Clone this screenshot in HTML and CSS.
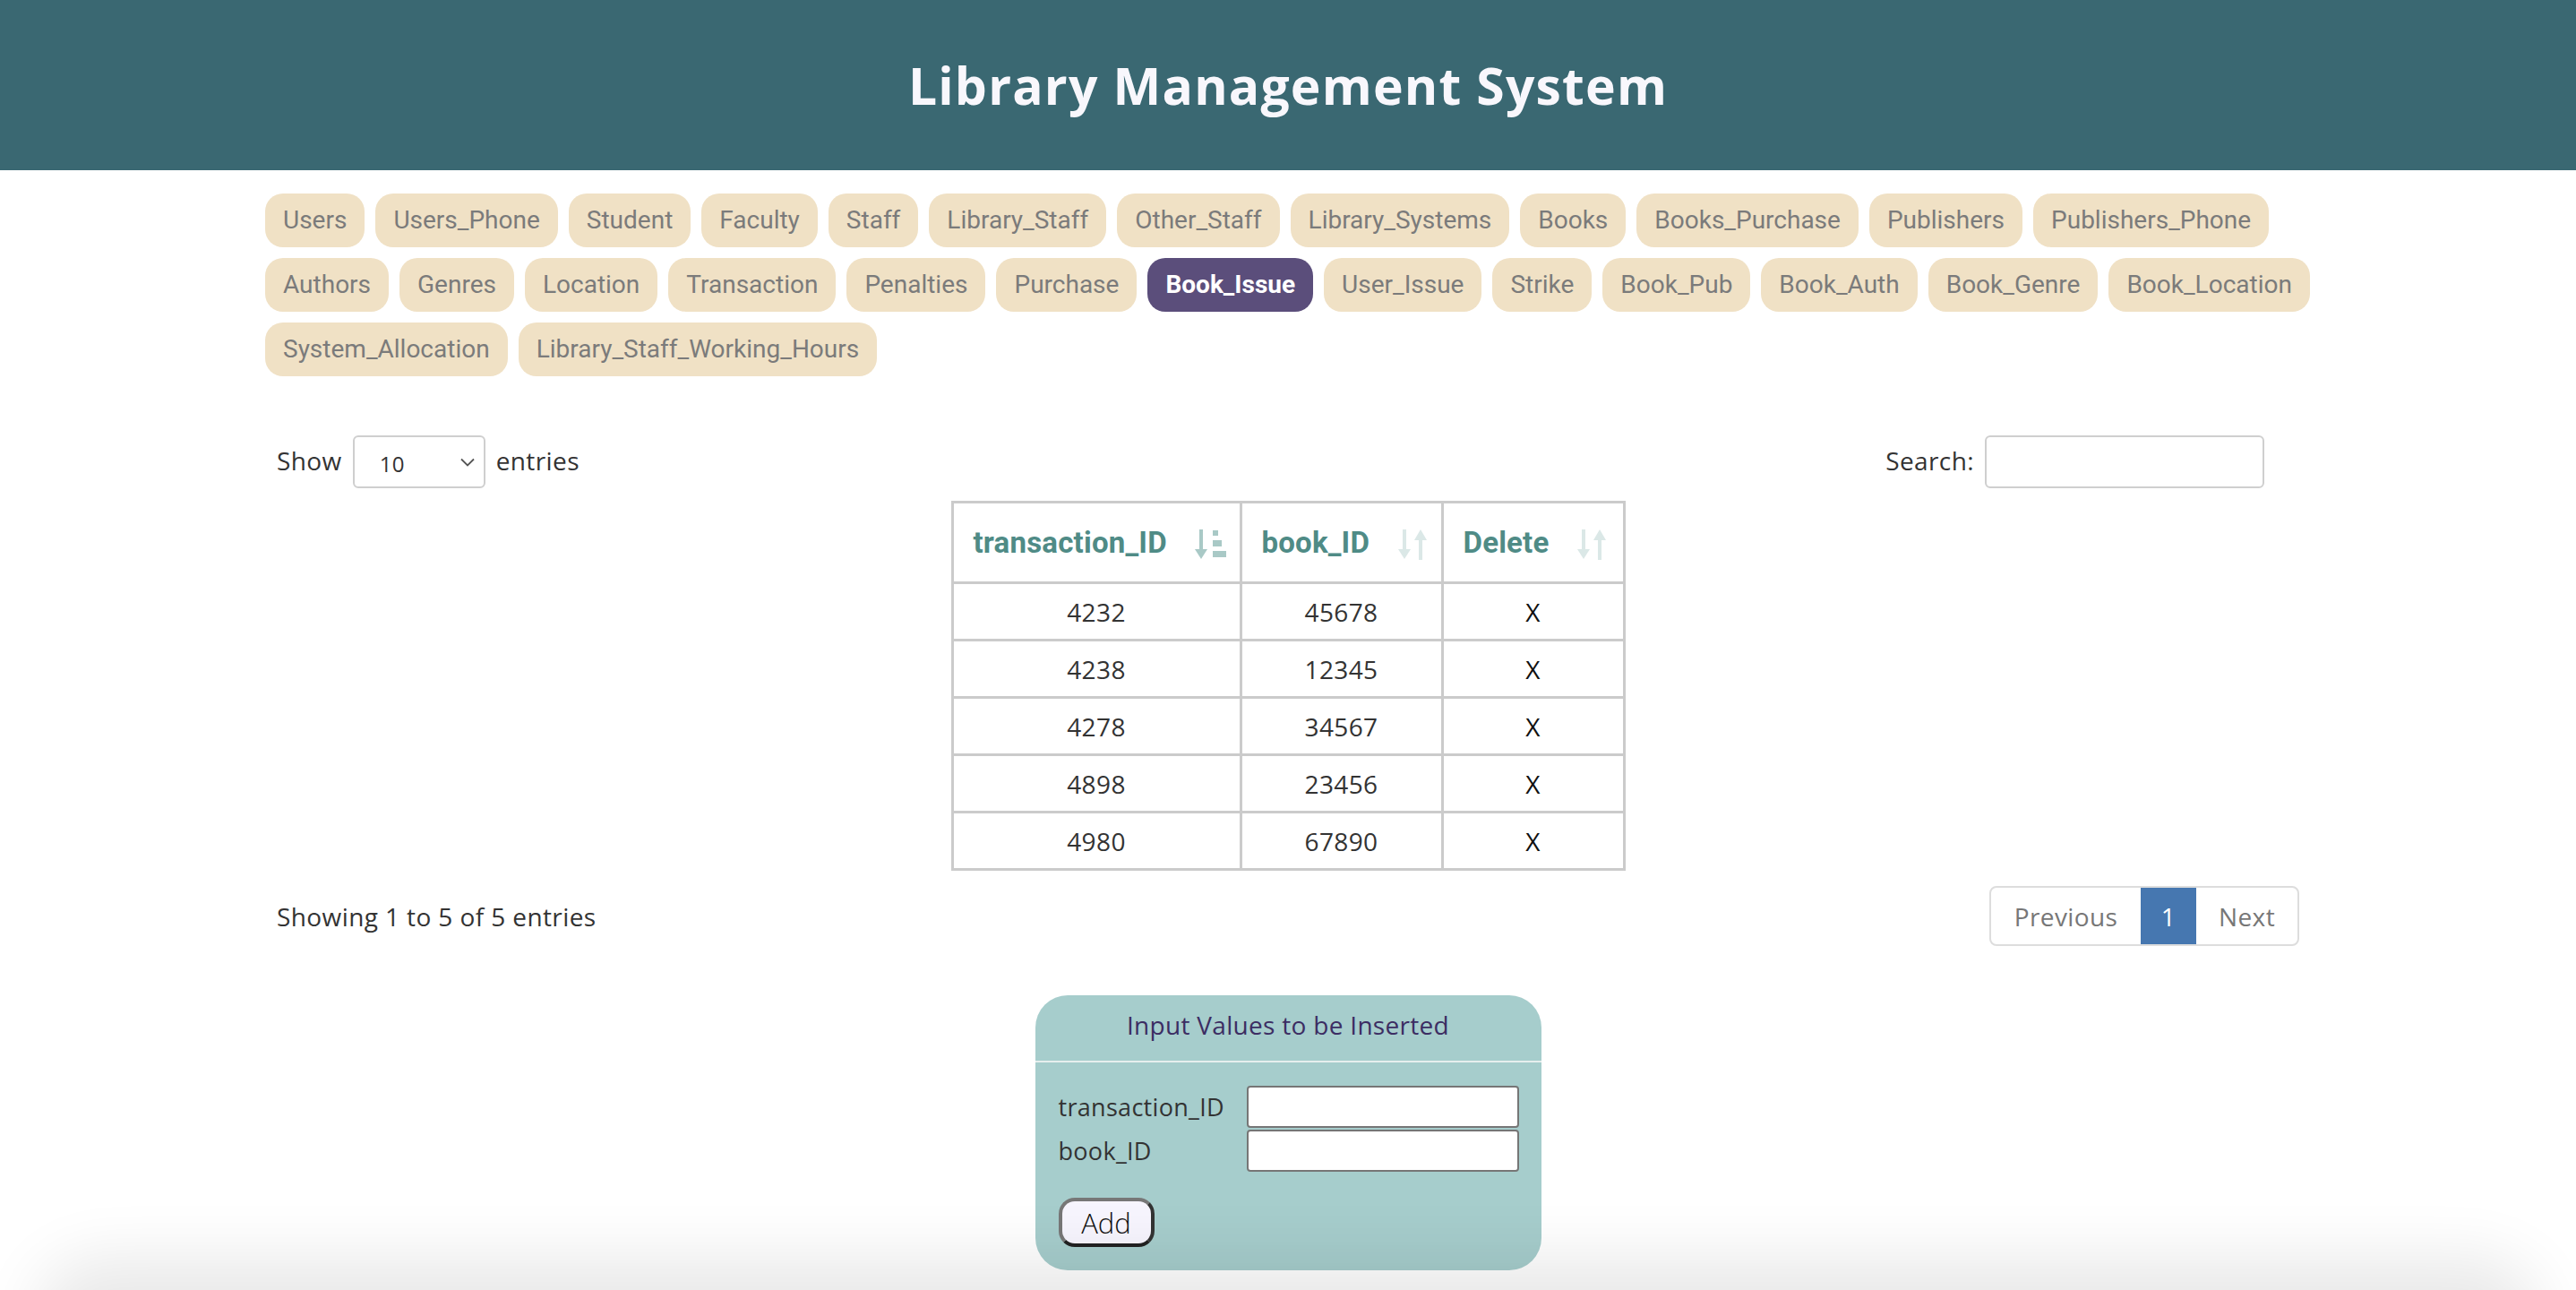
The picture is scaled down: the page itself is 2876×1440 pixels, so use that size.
FILE: index.html
```html
<!DOCTYPE html>
<html lang="en">
<head>
<meta charset="utf-8">
<title>Library Management System</title>
<link rel="stylesheet" href="styles.css">
</head>
<body>
<header class="site-header">
  <h1 class="site-title">Library Management System</h1>
</header>

<nav class="tabs">
  <button class="tab">Users</button>
  <button class="tab">Users_Phone</button>
  <button class="tab">Student</button>
  <button class="tab">Faculty</button>
  <button class="tab">Staff</button>
  <button class="tab">Library_Staff</button>
  <button class="tab">Other_Staff</button>
  <button class="tab">Library_Systems</button>
  <button class="tab">Books</button>
  <button class="tab">Books_Purchase</button>
  <button class="tab">Publishers</button>
  <button class="tab">Publishers_Phone</button>
  <button class="tab">Authors</button>
  <button class="tab">Genres</button>
  <button class="tab">Location</button>
  <button class="tab">Transaction</button>
  <button class="tab">Penalties</button>
  <button class="tab">Purchase</button>
  <button class="tab tab-active">Book_Issue</button>
  <button class="tab">User_Issue</button>
  <button class="tab">Strike</button>
  <button class="tab">Book_Pub</button>
  <button class="tab">Book_Auth</button>
  <button class="tab">Book_Genre</button>
  <button class="tab">Book_Location</button>
  <button class="tab">System_Allocation</button>
  <button class="tab">Library_Staff_Working_Hours</button>
</nav>

<section class="dt">
  <div class="dt-top">
    <div class="dt-length">
      <span>Show</span>
      <div class="select">
        <span class="select-value">10</span>
        <svg class="chev" width="16" height="10" viewBox="0 0 16 10"><path d="M1 1.5 L8 8.5 L15 1.5" fill="none" stroke="#555" stroke-width="1.8"/></svg>
      </div>
      <span>entries</span>
    </div>
    <div class="dt-search">
      <span>Search:</span>
      <div class="search-input"></div>
    </div>
  </div>

  <table class="grid">
    <thead>
      <tr>
        <th class="c1"><div class="th-in"><span>transaction_ID</span>
          <svg class="sort" width="36" height="34" viewBox="0 0 36 34"><rect x="5" y="0" width="4" height="24" fill="#a9c9c6"/><polygon points="0,22 14,22 7,33" fill="#a9c9c6"/><rect x="20" y="1" width="6" height="6" fill="#a9c9c6"/><rect x="20" y="12" width="10" height="7" fill="#a9c9c6"/><rect x="20" y="24" width="15" height="7" fill="#a9c9c6"/></svg></div></th>
        <th class="c2"><div class="th-in"><span>book_ID</span>
          <svg class="sort" width="34" height="34" viewBox="0 0 34 34"><rect x="5" y="0" width="4" height="24" fill="#dbe8e7"/><polygon points="0,22 14,22 7,33" fill="#dbe8e7"/><rect x="23" y="10" width="4" height="24" fill="#dbe8e7"/><polygon points="18,12 32,12 25,0" fill="#dbe8e7"/></svg></div></th>
        <th class="c3"><div class="th-in"><span>Delete</span>
          <svg class="sort" width="34" height="34" viewBox="0 0 34 34"><rect x="5" y="0" width="4" height="24" fill="#dbe8e7"/><polygon points="0,22 14,22 7,33" fill="#dbe8e7"/><rect x="23" y="10" width="4" height="24" fill="#dbe8e7"/><polygon points="18,12 32,12 25,0" fill="#dbe8e7"/></svg></div></th>
      </tr>
    </thead>
    <tbody>
      <tr><td>4232</td><td>45678</td><td class="x">X</td></tr>
      <tr><td>4238</td><td>12345</td><td class="x">X</td></tr>
      <tr><td>4278</td><td>34567</td><td class="x">X</td></tr>
      <tr><td>4898</td><td>23456</td><td class="x">X</td></tr>
      <tr><td>4980</td><td>67890</td><td class="x">X</td></tr>
    </tbody>
  </table>

  <div class="dt-bottom">
    <div class="dt-info">Showing 1 to 5 of 5 entries</div>
    <div class="pager">
      <span class="pg pg-prev">Previous</span>
      <span class="pg pg-cur">1</span>
      <span class="pg pg-next">Next</span>
    </div>
  </div>
</section>

<section class="card">
  <div class="card-head">Input Values to be Inserted</div>
  <div class="card-body">
    <div class="form-grid">
      <label class="lbl">transaction_ID</label>
      <div class="inp"></div>
      <label class="lbl">book_ID</label>
      <div class="inp"></div>
    </div>
    <button class="add-btn">Add</button>
  </div>
</section>

<div class="bottom-shade"></div>
</body>
</html>
```

FILE: styles.css
```css
html, body {
  margin: 0;
  padding: 0;
  background: #ffffff;
}
body {
  font-family: "Open Sans", "Liberation Sans", sans-serif;
  color: #333333;
  width: 2876px;
  height: 1440px;
  overflow: hidden;
  position: relative;
}

.site-header {
  height: 190px;
  background: #3a6872;
  display: flex;
  align-items: center;
  justify-content: center;
}
.site-title {
  margin: 0;
  font-family: "Open Sans", sans-serif;
  font-weight: 700;
  font-size: 57px;
  letter-spacing: 1.2px;
  color: #f8f7fc;
}

.tabs {
  width: 2292px;
  margin: 26px auto 0;
  padding-left: 8px;
  box-sizing: content-box;
  display: flex;
  flex-wrap: wrap;
  gap: 12px 12px;
}
.tab {
  height: 60px;
  padding: 0 20px;
  border: none;
  border-radius: 20px;
  background: #f0e1c5;
  color: #7b7b7b;
  font-family: Roboto, sans-serif;
  font-size: 28px;
  line-height: 60px;
  white-space: nowrap;
}
.tab-active {
  background: #5b4e7b;
  color: #ffffff;
  font-weight: 700;
}

.dt {
  width: 2258px;
  margin: 66px auto 0;
  font-size: 28px;
  letter-spacing: 0.4px;
}
.dt-top {
  display: flex;
  justify-content: space-between;
  align-items: center;
  height: 59px;
}
.dt-length {
  display: flex;
  align-items: center;
  gap: 12px;
}
.dt-length > span, .dt-search > span {
  margin-top: -3px;
}
.select {
  width: 148px;
  height: 59px;
  box-sizing: border-box;
  border: 2px solid #cfcfcf;
  border-radius: 6px;
  display: flex;
  align-items: center;
  justify-content: space-between;
  padding: 0 10px 0 28px;
}
.select-value {
  font-size: 24px;
  padding-top: 4px;
}
.dt-search {
  display: flex;
  align-items: center;
  gap: 12px;
  margin-right: 39px;
}
.search-input {
  width: 312px;
  height: 59px;
  box-sizing: border-box;
  border: 2px solid #cfcfcf;
  border-radius: 6px;
}

.grid {
  margin: 14px auto 0;
  border-collapse: collapse;
  border: 3px solid #cbcbcb;
}
.grid th, .grid td {
  border: 3px solid #cbcbcb;
  padding: 0;
}
.grid th {
  height: 87px;
  font-family: Roboto, sans-serif;
  font-weight: 700;
  font-size: 33px;
  color: #4f8b86;
  letter-spacing: 0.2px;
  text-align: left;
}
.th-in {
  display: flex;
  align-items: center;
  justify-content: space-between;
  padding: 0 14px 0 22px;
}
.c1 { width: 319px; }
.c2 { width: 222px; }
.c3 { width: 200px; }
.c3 .th-in { padding-right: 17px; }
.sort { display: block; margin-top: 4px; }
.grid td {
  height: 61px;
  text-align: center;
  color: #333333;
}
.grid td.x {
  color: #111111;
}

.dt-bottom {
  margin-top: 17px;
  display: flex;
  justify-content: space-between;
  align-items: center;
  height: 67px;
}
.pager {
  display: flex;
  height: 67px;
  box-sizing: border-box;
  border: 2px solid #dddddd;
  border-radius: 8px;
  overflow: hidden;
  color: #777777;
}
.pg {
  display: flex;
  align-items: center;
  justify-content: center;
}
.pg-prev { width: 167px; }
.pg-cur { width: 62px; background: #4677b0; color: #ffffff; }
.pg-next { width: 113px; }

.card {
  width: 565px;
  margin: 55px auto 0;
  background: #a6cdcc;
  border-radius: 36px;
  overflow: hidden;
}
.card-head {
  height: 75px;
  box-sizing: border-box;
  padding-bottom: 8px;
  display: flex;
  align-items: center;
  justify-content: center;
  font-size: 28px;
  color: #3c2d63;
  letter-spacing: 0.3px;
  border-bottom: 2px solid #e6efee;
}
.card-body {
  padding: 26px 25px 26px 26px;
}
.form-grid {
  display: grid;
  grid-template-columns: 210px 304px;
  row-gap: 2px;
  align-items: center;
}
.lbl {
  font-size: 27px;
  color: #333333;
  letter-spacing: 0.3px;
}
.inp {
  height: 47px;
  box-sizing: border-box;
  background: #ffffff;
  border: 2px solid #767676;
  border-radius: 4px;
}
.add-btn {
  margin-top: 29px;
  width: 107px;
  height: 55px;
  box-sizing: border-box;
  background: #f7f5fe;
  border-style: solid;
  border-width: 4px;
  border-color: #777777 #333333 #222222 #777777;
  border-radius: 18px;
  font-family: "Open Sans", sans-serif;
  font-weight: 300;
  font-size: 31px;
  color: #111111;
  padding: 0;
}

.bottom-shade {
  position: fixed;
  left: 70px;
  right: 70px;
  bottom: -80px;
  height: 80px;
  border-radius: 60px;
  box-shadow: 0 -6px 70px 30px rgba(0, 0, 0, 0.09);
  pointer-events: none;
}
```
